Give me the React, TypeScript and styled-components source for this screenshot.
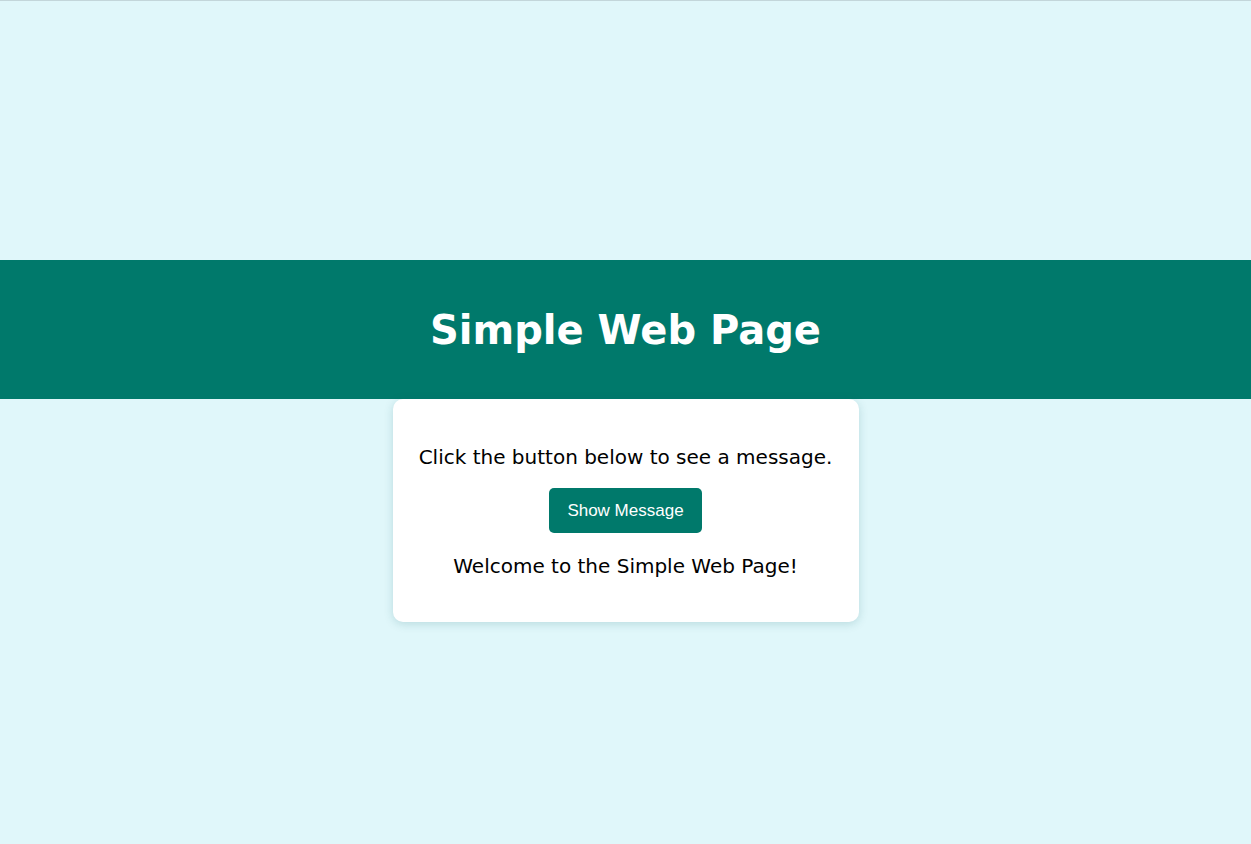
import React, { useState } from "react";
import styled, { createGlobalStyle } from "styled-components";

const GlobalStyle = createGlobalStyle`
  html, body {
    margin: 0;
    padding: 0;
    background: #e0f7fa;
  }
  body {
    font-family: "DejaVu Sans", Verdana, sans-serif;
  }
`;

const Page = styled.div`
  min-height: 100vh;
  box-sizing: border-box;
  border-top: 1px solid #c3d6da;
  padding-top: 259px;
  display: flex;
  flex-direction: column;
  align-items: center;
`;

const Header = styled.header`
  align-self: stretch;
  height: 139px;
  background: #00796b;
  display: flex;
  align-items: center;
  justify-content: center;
`;

const Title = styled.h1`
  margin: 0;
  color: #ffffff;
  font-family: "DejaVu Sans", Verdana, sans-serif;
  font-weight: bold;
  font-size: 40px;
  line-height: 47px;
  transform: translateY(1px);
`;

const Card = styled.main`
  width: 466px;
  box-sizing: border-box;
  background: #ffffff;
  border-radius: 10px;
  box-shadow: 0 2px 10px rgba(0, 96, 100, 0.18);
  padding: 47px 20px 44px;
  display: flex;
  flex-direction: column;
  align-items: center;
`;

const Text = styled.p`
  margin: 0;
  font-size: 20px;
  line-height: 23px;
  color: #000000;
  text-align: center;
  white-space: nowrap;
`;

const Button = styled.button`
  margin: 19px 0 22px;
  height: 45px;
  padding: 0 18px;
  border: none;
  border-radius: 5px;
  background: #00796b;
  color: #ffffff;
  font-family: "Liberation Sans", Arial, sans-serif;
  font-size: 17px;
  cursor: pointer;
`;

export default function App() {
  const [msg] = useState("Welcome to the Simple Web Page!");
  return (
    <>
      <GlobalStyle />
      <Page>
        <Header>
          <Title>Simple Web Page</Title>
        </Header>
        <Card>
          <Text>Click the button below to see a message.</Text>
          <Button>Show Message</Button>
          <Text>{msg}</Text>
        </Card>
      </Page>
    </>
  );
}
